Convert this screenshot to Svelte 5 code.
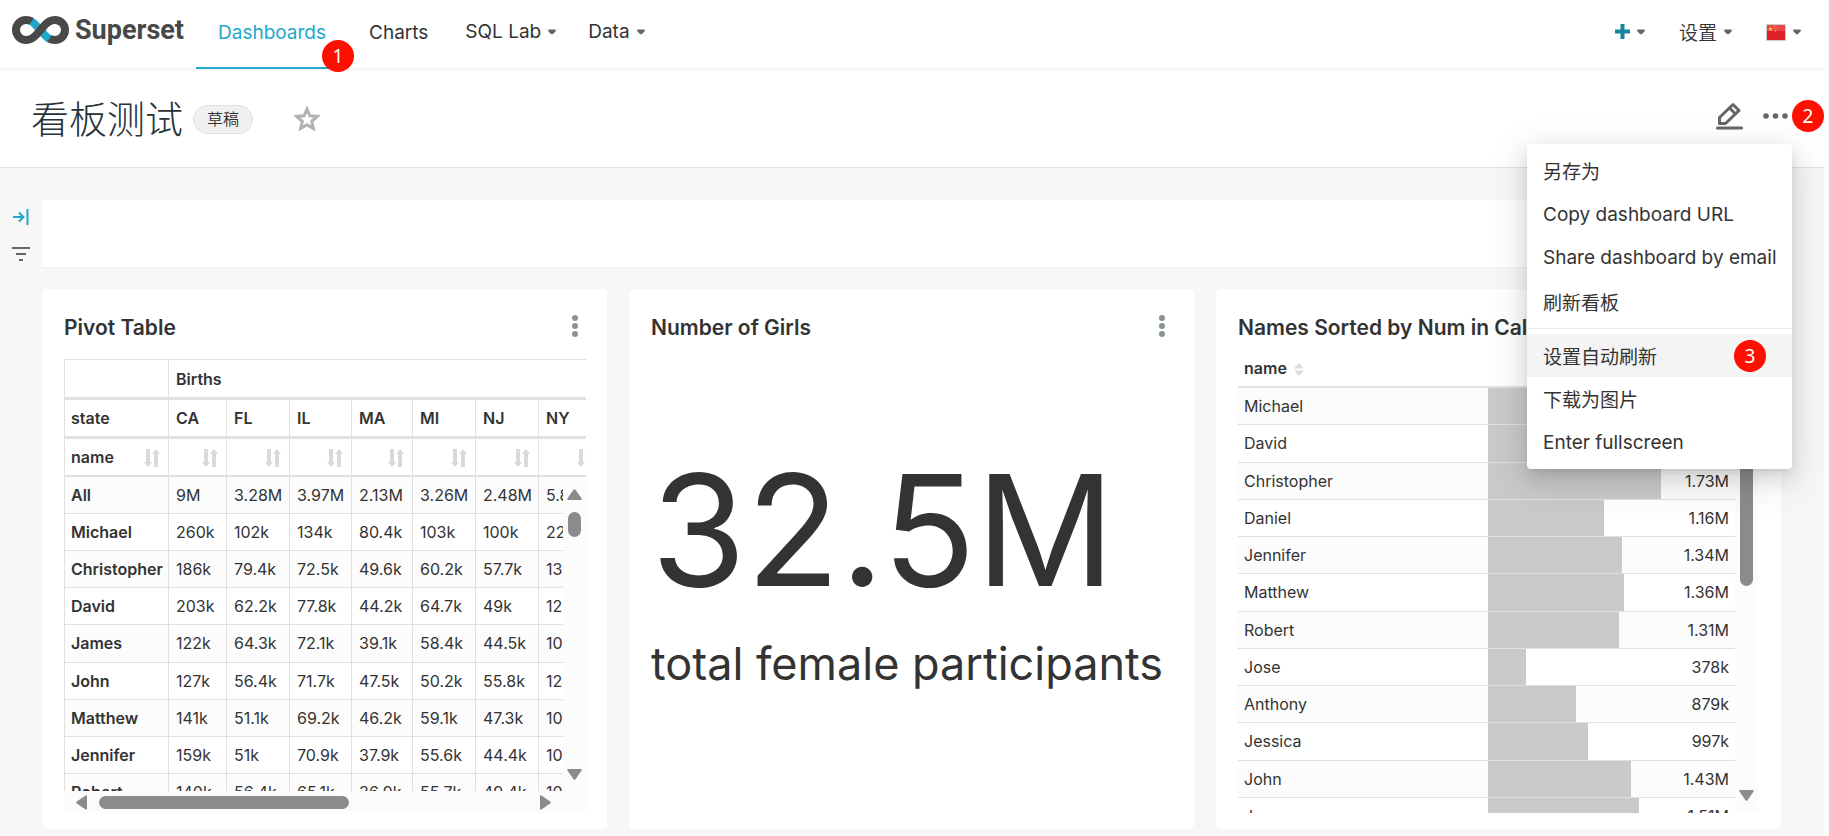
<script>
  const links = [
    { label: 'Dashboards', active: true, badge: 1 },
    { label: 'Charts' },
    { label: 'SQL Lab', caret: true },
    { label: 'Data', caret: true },
  ];

  const states = ['CA', 'FL', 'IL', 'MA', 'MI', 'NJ', 'NY'];
  const births = [
    ['All', '9M', '3.28M', '3.97M', '2.13M', '3.26M', '2.48M', '5.89M'],
    ['Michael', '260k', '102k', '134k', '80.4k', '103k', '100k', '222k'],
    ['Christopher', '186k', '79.4k', '72.5k', '49.6k', '60.2k', '57.7k', '138k'],
    ['David', '203k', '62.2k', '77.8k', '44.2k', '64.7k', '49k', '123k'],
    ['James', '122k', '64.3k', '72.1k', '39.1k', '58.4k', '44.5k', '104k'],
    ['John', '127k', '56.4k', '71.7k', '47.5k', '50.2k', '55.8k', '124k'],
    ['Matthew', '141k', '51.1k', '69.2k', '46.2k', '59.1k', '47.3k', '107k'],
    ['Jennifer', '159k', '51k', '70.9k', '37.9k', '55.6k', '44.4k', '102k'],
    ['Robert', '140k', '56.4k', '65.1k', '36.9k', '55.7k', '49.4k', '109k'],
  ];

  const MAX = 2470;
  const names = [
    ['Michael', 2470, ''],
    ['David', 2280, ''],
    ['Christopher', 1730, '1.73M'],
    ['Daniel', 1160, '1.16M'],
    ['Jennifer', 1340, '1.34M'],
    ['Matthew', 1360, '1.36M'],
    ['Robert', 1310, '1.31M'],
    ['Jose', 378, '378k'],
    ['Anthony', 879, '879k'],
    ['Jessica', 997, '997k'],
    ['John', 1430, '1.43M'],
    ['James', 1510, '1.51M'],
  ];

  const menuTop = ['另存为', 'Copy dashboard URL', 'Share dashboard by email', '刷新看板'];
  const menuBottom = ['设置自动刷新', '下载为图片', 'Enter fullscreen'];
</script>

{#snippet caret()}
  <svg class="caret" viewBox="0 0 8 6" aria-hidden="true"><path d="M0 1.2Q0 .5.8.5h6.4q.8 0 .8.7Q8 2 4.9 5.100Q4 5.900 3.100 5.100 0 2 0 1.200z" /></svg>
{/snippet}

{#snippet kebab()}
  <button class="kebab" type="button" aria-label="More">
    <svg viewBox="0 0 6 24"><circle cx="3" cy="4" r="3" /><circle cx="3" cy="12" r="3" /><circle cx="3" cy="20" r="3" /></svg>
  </button>
{/snippet}

{#snippet sorter()}
  <svg class="sorter" viewBox="0 0 16 18" aria-hidden="true">
    <path d="M2 0h4v13h2l-4 5-4-5h2zM10 18h4V5h2l-4-5-4 5h2z" />
  </svg>
{/snippet}

{#snippet arrow(dir)}
  <svg class="arrow {dir}" viewBox="0 0 15 11" aria-hidden="true"><path d="M6.500.8Q7.500-.4 8.500.8L14.600 9.500Q15 11 13.800 11H1.200Q0 11 .4 9.500z" /></svg>
{/snippet}

<div class="page">
  <header class="navbar">
    <a class="brand" href="#home">
      <svg viewBox="0 0 57 28" aria-hidden="true">
        <g fill="none" stroke-width="8">
          <path stroke="#20a7c9" d="M18 4.500C21 6 24 9 26 11.500L31 17C33 19.500 36 22.500 39 23.500" />
          <path stroke="#484848" d="M19.500 5.500C18 4.500 16 4 14 4a10 10 0 0 0 0 20c5 0 8-2.500 10.500-5.500L32.500 9.500C35 6.500 38 4 43 4a10 10 0 0 1 0 20c-2 0-4-.5-5.500-1.500" />
        </g>
      </svg>
      <span>Superset</span>
    </a>
    <nav class="links">
      {#each links as link}
        <a href="#nav" class:active={link.active} class:drop={link.caret}>
          {link.label}
          {#if link.caret}{@render caret()}{/if}
          {#if link.badge}<span class="badge nav-badge">{link.badge}</span>{/if}
        </a>
      {/each}
    </nav>
    <div class="tools">
      <button type="button" aria-label="New">
        <svg class="plus" viewBox="0 0 15 15"><path d="M5.500 0h4v5.500H15v4H9.500V15h-4V9.500H0v-4h5.500z" /></svg>
        {@render caret()}
      </button>
      <button type="button">设置{@render caret()}</button>
      <button type="button" aria-label="Language">
        <svg class="flag" viewBox="0 0 20 17">
          <rect width="20" height="17" rx="1" fill="#c9ced0" />
          <rect x="1" y="1" width="18" height="15" fill="#dd1f26" />
          <rect x="1" y="1" width="18" height="6" fill="#e8494c" />
          <path fill="#f9d749" d="M4.500 2.500l.6 1.700h1.700L5.400 5.300l.6 1.700-1.500-1-1.500 1 .6-1.700-1.400-1.100h1.700zM8 2h1v1H8zM9.500 4h1v1h-1zM9 6.500h1v1H9z" />
        </svg>
        {@render caret()}
      </button>
    </div>
  </header>

  <section class="title-bar">
    <h1>看板测试</h1>
    <span class="status">草稿</span>
    <button class="star" type="button" aria-label="Favorite">
      <svg viewBox="0 0 26 25"><path d="M13 3l2.900 6.800 7.400.6-5.600 4.900 1.700 7.200L13 18.700l-6.400 3.800 1.700-7.200-5.600-4.900 7.400-.6z" /></svg>
    </button>
    <div class="actions">
      <button class="edit" type="button" aria-label="Edit dashboard">
        <svg viewBox="0 0 27 28"><path d="M3.500 21.500v-6L17 2.500l6 6L9.500 21.500zM13.500 6l6 6M1.500 26h24" /></svg>
      </button>
      <div class="more">
        <button class="dots" type="button" aria-label="More actions">
          <svg viewBox="0 0 25 6"><circle cx="3" cy="3" r="2.800" /><circle cx="12.500" cy="3" r="2.800" /><circle cx="22" cy="3" r="2.800" /></svg>
        </button>
        <span class="badge">2</span>
        <div class="menu">
          <div class="menu-group four">
            {#each menuTop as item}<button type="button">{item}</button>{/each}
          </div>
          <hr />
          <div class="menu-group three">
            {#each menuBottom as item, i}
              <button type="button" class:hover={i === 0}>{item}{#if i === 0}<span class="badge">3</span>{/if}</button>
            {/each}
          </div>
        </div>
      </div>
    </div>
  </section>

  <main>
    <aside>
      <button type="button" aria-label="Expand">
        <svg class="expand" viewBox="0 0 16 16"><path d="M0 8h10.500M6 3.500L10.500 8 6 12.500M14.500 0v16" /></svg>
      </button>
      <button type="button" aria-label="Filters">
        <svg class="filter" viewBox="0 0 18 16"><path d="M0 2h18M4 8h10M7 14h4" /></svg>
      </button>
    </aside>
    <div class="board">
      <div class="filter-box"></div>
      <div class="cards">
        <article class="card">
          <header><h2>Pivot Table</h2>{@render kebab()}</header>
          <div class="pivot">
            <div class="clip">
              <table>
                <colgroup><col class="first" /><col class="w58" /><col class="w63" /><col class="w62" /><col class="w61" /><col class="w63" /><col class="w63" /><col class="w63" /></colgroup>
                <thead>
                  <tr><th></th><th colspan="7">Births</th></tr>
                  <tr><th>state</th>{#each states as s}<th>{s}</th>{/each}</tr>
                  <tr>
                    <th><div class="sort-cell">name{@render sorter()}</div></th>
                    {#each states as s}<th><div class="sort-cell end">{@render sorter()}</div></th>{/each}
                  </tr>
                </thead>
              </table>
            </div>
            <div class="scroll-row">
              <div class="clip">
                <table class="body">
                  <colgroup><col class="first" /><col class="w58" /><col class="w63" /><col class="w62" /><col class="w61" /><col class="w63" /><col class="w63" /><col class="w63" /></colgroup>
                  <tbody>
                    {#each births as [name, ...cells]}
                      <tr><th>{name}</th>{#each cells as c}<td>{c}</td>{/each}</tr>
                    {/each}
                  </tbody>
                </table>
              </div>
              <div class="vbar">
                {@render arrow('up')}
                <span class="thumb short"></span>
                {@render arrow('down')}
              </div>
            </div>
            <div class="hbar">
              {@render arrow('left')}
              <span class="thumb"></span>
              {@render arrow('right')}
            </div>
          </div>
        </article>

        <article class="card">
          <header><h2>Number of Girls</h2>{@render kebab()}</header>
          <div class="number">
            <div class="big">32.5M</div>
            <div class="sub">total female participants</div>
          </div>
        </article>

        <article class="card">
          <header><h2>Names Sorted by Num in California</h2></header>
          <div class="names">
            <div class="clip">
              <table>
                <thead>
                  <tr>
                    <th>name <svg class="updown" viewBox="0 0 10 13" aria-hidden="true"><path d="M0 5.500L5 0l5 5.500zM0 7.500h10L5 13z" /></svg></th>
                    <th></th>
                  </tr>
                </thead>
                <tbody>
                  {#each names as [name, value, text]}
                    <tr>
                      <td>{name}</td>
                      <td class="bar-cell"><div class="bar" style="width: {(value / MAX) * 100}%"></div><span>{text}</span></td>
                    </tr>
                  {/each}
                </tbody>
              </table>
            </div>
            <div class="vbar">
              <span class="thumb long"></span>
              {@render arrow('down')}
            </div>
          </div>
        </article>
      </div>
    </div>
  </main>
</div>

<style>
  :global(body) {
    background: #f7f7f7;
  }
  .page {
    box-sizing: border-box;
    font-family: Inter, 'Noto Sans CJK SC', sans-serif;
    font-size: 19px;
    color: #333;
    overflow: hidden;
    background: #f7f7f7;
    height: 100vh;
    min-height: 836px;
    border-right: 5px solid #fbfbfb;
  }
  .page * {
    box-sizing: border-box;
  }
  button {
    font: inherit;
    color: inherit;
    background: none;
    border: none;
    padding: 0;
    cursor: pointer;
    display: flex;
    align-items: center;
  }
  a {
    color: inherit;
    text-decoration: none;
  }
  svg {
    display: block;
    flex: none;
  }
  .badge {
    width: 32px;
    height: 32px;
    border-radius: 50%;
    background: #ff0f00;
    color: #fff;
    font: 19px/32px 'Noto Sans', sans-serif;
    text-align: center;
    flex: none;
  }
  .caret {
    width: 8px;
    height: 6px;
    margin: 2px 0 0 7px;
    fill: #666;
  }

  .navbar {
    display: flex;
    height: 71px;
    background: #fff;
    border-bottom: 3px solid #f6f6f6;
    padding: 0 23px 0 12px;
  }
  .brand {
    display: flex;
    align-items: center;
    gap: 6px;
    height: 60px;
    width: 184px;
    color: #484848;
    font: 700 27px Roboto, sans-serif;
  }
  .brand svg {
    width: 57px;
    height: 28px;
  }
  .links {
    display: flex;
    flex: 1;
  }
  .links a {
    position: relative;
    display: flex;
    align-items: center;
    height: 69px;
    padding: 0 21px 5px 22px;
  }
  .links .drop {
    padding: 0 16px 7px;
  }
  .links .active {
    color: #20a7c9;
    border-bottom: 2px solid #20a7c9;
    padding-bottom: 3px;
  }
  .nav-badge {
    position: absolute;
    right: -7px;
    bottom: -5px;
    z-index: 2;
  }
  .tools {
    display: flex;
    gap: 34px;
    height: 62px;
    font-weight: 350;
  }
  .plus {
    width: 15px;
    height: 15px;
    fill: #1985a0;
  }
  .flag {
    width: 20px;
    height: 17px;
    margin-top: 3px;
  }

  .title-bar {
    display: flex;
    align-items: center;
    height: 97px;
    background: #fff;
    border-bottom: 1px solid #e0e0e0;
    padding: 0 0 0 31px;
  }
  h1 {
    margin: 0;
    font-size: 38px;
    font-weight: 300;
    line-height: 48px;
    color: #263238;
  }
  .status {
    margin-left: 10px;
    border: 1px solid #e0e0e0;
    background: #f0f0f0;
    border-radius: 15px;
    padding: 0 13px;
    font-size: 16px;
    font-weight: 350;
    line-height: 27px;
  }
  .star {
    margin: 0 0 2px 41px;
  }
  .star svg {
    width: 26px;
    height: 25px;
    fill: none;
    stroke: #b2b2b2;
    stroke-width: 3;
  }
  .actions {
    display: flex;
    align-items: center;
    gap: 20px;
    margin-left: auto;
    padding-bottom: 6px;
  }
  .edit svg {
    width: 27px;
    height: 28px;
    fill: none;
    stroke: #666;
    stroke-width: 3;
    stroke-linejoin: round;
    stroke-linecap: round;
  }
  .more {
    position: relative;
    display: flex;
    align-items: center;
    gap: 4px;
  }
  .dots svg {
    width: 25px;
    height: 6px;
    fill: #666;
  }
  .menu {
    position: absolute;
    top: 44px;
    right: 32px;
    width: 265px;
    padding: 5px 0;
    background: #fff;
    border-radius: 4px;
    box-shadow: 0 4px 8px -4px #0002, 0 8px 22px #0002, 0 12px 38px 10px #0001;
    z-index: 5;
  }
  .menu-group {
    display: grid;
    grid-auto-rows: 1fr;
  }
  .four {
    height: 174px;
  }
  .three {
    height: 130px;
  }
  .menu button {
    padding: 0 26px 0 16px;
    justify-content: space-between;
    white-space: nowrap;
  }
  .menu .hover {
    background: #f4f4f4;
  }
  hr {
    border: none;
    height: 1px;
    margin: 5px 0;
    background: #eee;
  }

  main {
    display: flex;
    padding: 32px 43px 0 0;
  }
  aside {
    width: 42px;
    display: flex;
    flex-direction: column;
    align-items: center;
    gap: 21px;
    padding-top: 9px;
    flex: none;
  }
  aside svg {
    fill: none;
    stroke-width: 2;
  }
  .expand {
    width: 16px;
    height: 16px;
    stroke: #20a7c9;
  }
  .filter {
    width: 18px;
    height: 16px;
    stroke: #666;
  }
  .board {
    flex: 1;
    min-width: 0;
  }
  .filter-box {
    height: 67px;
    background: #fff;
    box-shadow: 0 1px 0 #eee;
    margin-bottom: 22px;
  }
  .cards {
    display: grid;
    grid-template-columns: repeat(3, minmax(0, 1fr));
    gap: 22px;
  }
  .card {
    height: 540px;
    background: #fff;
    border-radius: 5px;
    padding: 23px 21px 0 22px;
  }
  .card header {
    display: flex;
    justify-content: space-between;
    height: 31px;
  }
  h2 {
    margin: 0;
    font-size: 21px;
    font-weight: 600;
    line-height: 32px;
    white-space: nowrap;
  }
  .kebab {
    height: 28px;
    margin-right: 8px;
  }
  .kebab svg {
    width: 6px;
    height: 24px;
    fill: #879399;
  }

  table {
    border-collapse: separate;
    border-spacing: 0;
    table-layout: fixed;
    font-size: 16px;
    line-height: 24px;
  }
  th {
    text-align: left;
    font-weight: 600;
  }
  .clip {
    overflow: hidden;
    flex: 1;
    min-width: 0;
  }
  .arrow {
    width: 15px;
    height: 11px;
    fill: #8b8b8b;
  }
  .down {
    transform: rotate(180deg);
  }
  .left {
    transform: rotate(-90deg);
  }
  .right {
    transform: rotate(90deg);
  }
  .thumb {
    display: block;
    background: #8b8b8b;
    border-radius: 7px;
  }
  .vbar {
    display: flex;
    flex-direction: column;
    align-items: center;
    width: 23px;
    background: #fcfcfc;
    flex: none;
  }
  .vbar .down {
    margin-top: auto;
  }

  .pivot {
    padding-top: 16px;
  }
  .pivot table {
    width: 537px;
  }
  .pivot .body {
    height: 334px;
  }
  .first {
    width: 105px;
  }
  .w58 {
    width: 58px;
  }
  .w61 {
    width: 61px;
  }
  .w62 {
    width: 62px;
  }
  .w63 {
    width: 63px;
  }
  .pivot th,
  .pivot td {
    border-right: 1px solid #e0e0e0;
    border-bottom: 1px solid #e0e0e0;
    height: 37px;
    padding: 0 0 0 7px;
    white-space: nowrap;
  }
  .pivot th:first-child {
    border-left: 1px solid #e0e0e0;
    padding-left: 6px;
  }
  .pivot thead th {
    height: 39px;
    border-bottom-width: 3px;
  }
  .pivot thead tr:first-child th {
    height: 41px;
    border-top: 1px solid #e0e0e0;
  }
  .pivot thead tr:last-child th {
    height: 38px;
    border-bottom-width: 2px;
  }
  .sort-cell {
    display: flex;
    justify-content: space-between;
    align-items: center;
    padding-right: 8px;
  }
  .end {
    justify-content: flex-end;
  }
  .sorter {
    width: 16px;
    height: 18px;
    margin-top: 2px;
    fill: #d9d9d9;
  }
  tbody tr:nth-child(odd) {
    background: #fcfcfc;
  }
  .scroll-row {
    display: flex;
    height: 314px;
  }
  .scroll-row .vbar {
    padding: 12px 0 11px;
  }
  .short {
    width: 13px;
    height: 25px;
    margin-top: 12px;
  }
  .hbar {
    display: flex;
    align-items: center;
    height: 23px;
    padding: 0 33px 0 10px;
    background: #fcfcfc;
  }
  .hbar .thumb {
    width: 250px;
    height: 13px;
    margin: 0 auto 0 10px;
  }

  .number {
    display: flex;
    flex-direction: column;
  }
  .big {
    font-size: 154px;
    line-height: 186px;
    margin-top: 94px;
  }
  .sub {
    font-size: 45px;
    line-height: 60px;
    margin-top: 11px;
    white-space: nowrap;
  }

  .names {
    display: flex;
    height: 470px;
    margin-right: 2px;
  }
  .names table {
    width: 100%;
    height: 492px;
  }
  .names th,
  .names td {
    padding: 0 6px;
    height: 37px;
    border-bottom: 1px solid #e0e0e0;
  }
  .names th {
    height: 45px;
    padding-top: 7px;
    border-bottom: 2px solid #e0e0e0;
  }
  .updown {
    display: inline-block;
    width: 10px;
    height: 13px;
    margin-left: 3px;
    vertical-align: -2px;
    fill: #dcdcdc;
  }
  .names .bar-cell {
    position: relative;
    text-align: right;
  }
  .names th:last-child {
    width: 247px;
  }
  .bar {
    position: absolute;
    left: 0;
    top: 0;
    height: 100%;
    background: #cacaca;
  }
  .bar-cell span {
    position: relative;
  }
  .names .vbar {
    padding: 46px 0 12px;
  }
  .long {
    width: 13px;
    height: 197px;
  }
</style>
